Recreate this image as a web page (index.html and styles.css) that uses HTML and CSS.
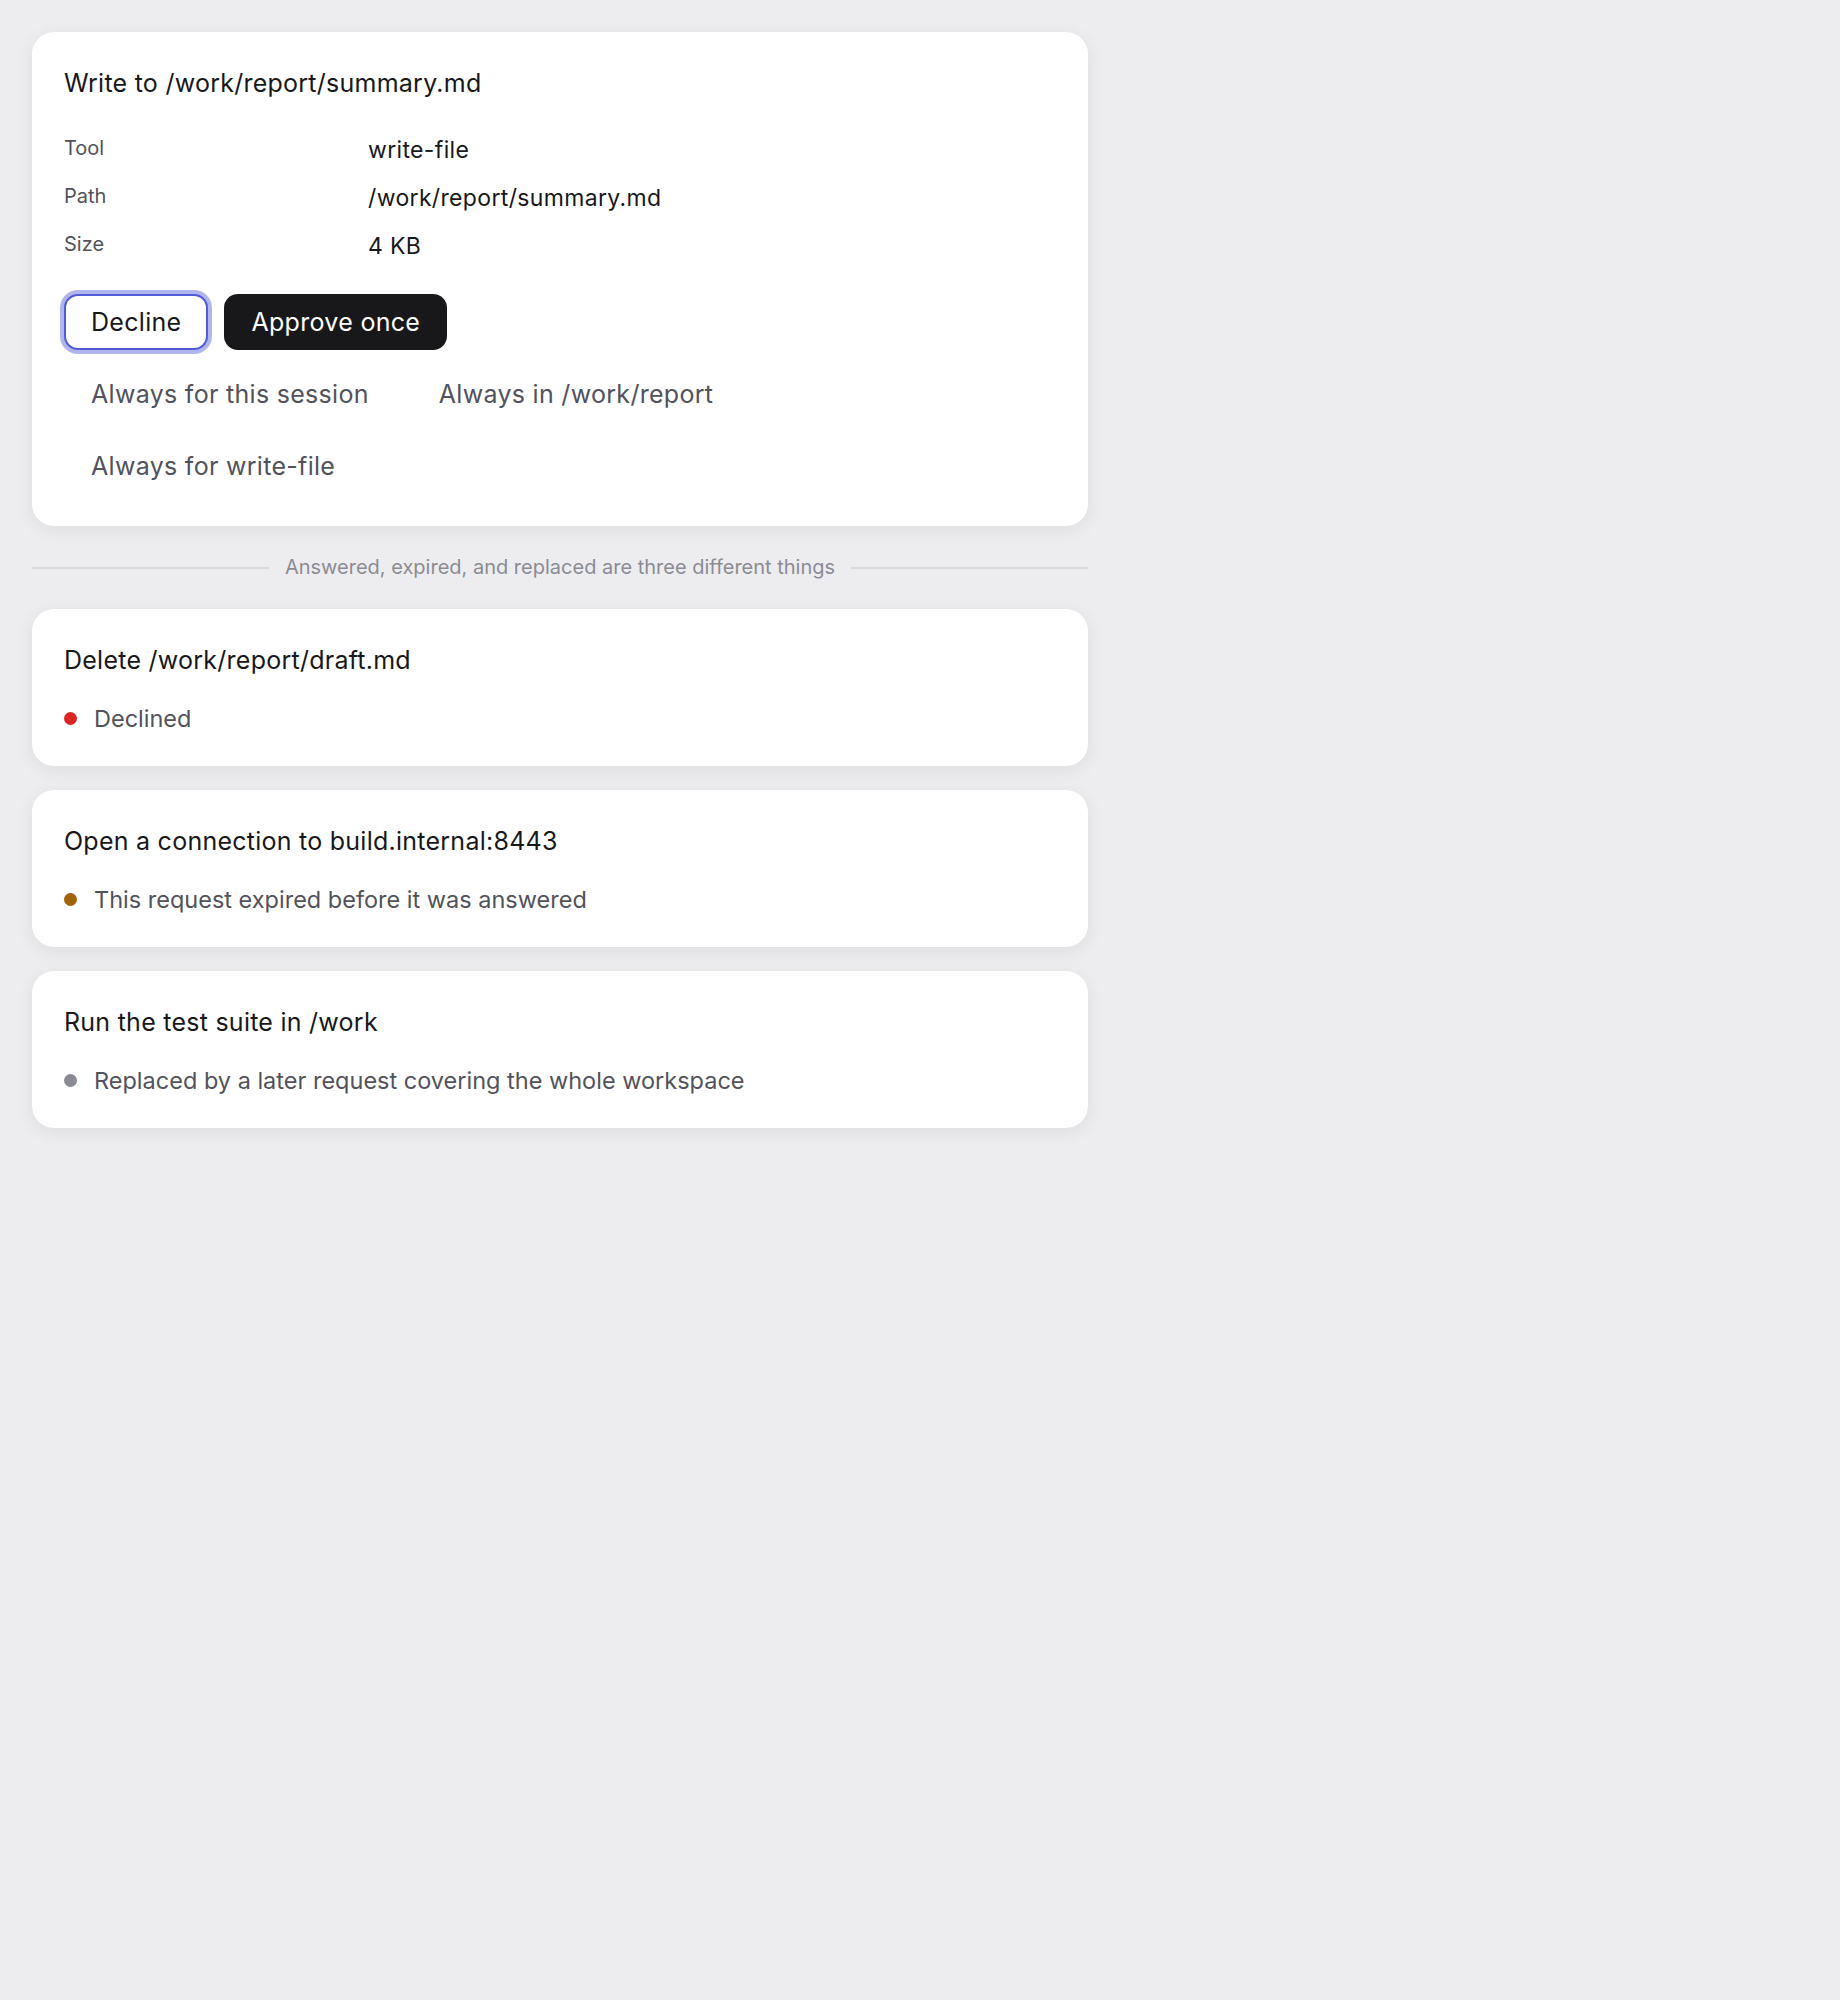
FILE: index.html
```html
<!DOCTYPE html>
<html lang="en">
<head>
    <meta charset="UTF-8">
    <meta name="viewport" content="width=device-width, initial-scale=1.0">
    <title>Permission requests</title>
    <link rel="stylesheet" href="styles.css">
</head>
<body>
    <main class="requests">
        <section class="card">
            <h2 class="card-title">Write to /work/report/summary.md</h2>
            <dl class="details">
                <dt>Tool</dt>
                <dd>write-file</dd>
                <dt>Path</dt>
                <dd>/work/report/summary.md</dd>
                <dt>Size</dt>
                <dd>4 KB</dd>
            </dl>
            <div class="actions">
                <button class="btn btn-outline is-focused">Decline</button>
                <button class="btn btn-dark">Approve once</button>
            </div>
            <div class="more-actions">
                <button class="btn btn-ghost">Always for this session</button>
                <button class="btn btn-ghost">Always in /work/report</button>
                <button class="btn btn-ghost">Always for write-file</button>
            </div>
        </section>

        <div class="divider"><span>Answered, expired, and replaced are three different things</span></div>

        <section class="card">
            <h2 class="card-title">Delete /work/report/draft.md</h2>
            <p class="status"><span class="dot dot-declined"></span>Declined</p>
        </section>

        <section class="card">
            <h2 class="card-title">Open a connection to build.internal:8443</h2>
            <p class="status"><span class="dot dot-expired"></span>This request expired before it was answered</p>
        </section>

        <section class="card">
            <h2 class="card-title">Run the test suite in /work</h2>
            <p class="status"><span class="dot dot-replaced"></span>Replaced by a later request covering the whole workspace</p>
        </section>
    </main>
</body>
</html>
```

FILE: styles.css
```css
* {
    margin: 0;
    padding: 0;
    box-sizing: border-box;
}

body {
    background: #ededf0;
    color: #18181b;
    font-family: Inter, "Noto Sans", sans-serif;
    padding: 32px;
}

.requests {
    width: 1056px;
    display: flex;
    flex-direction: column;
    gap: 24px;
}

.card {
    background: white;
    border-radius: 22px;
    padding: 32px;
    box-shadow: 0px 4px 18px rgba(24, 24, 27, 0.07);
}

.card-title {
    font-size: 25px;
    font-weight: 400;
    line-height: 38px;
    letter-spacing: 0.01em;
}

.details {
    display: grid;
    grid-template-columns: 304px 1fr;
    margin-top: 24px;
}

.details dt,
.details dd {
    height: 48px;
    display: flex;
    align-items: center;
}

.details dt {
    font-size: 20px;
    color: #52525b;
    padding-bottom: 4px;
}

.details dd {
    font-size: 23px;
    letter-spacing: 0.015em;
}

.actions {
    display: flex;
    gap: 16px;
    margin-top: 24px;
}

.more-actions {
    display: grid;
    grid-template-columns: repeat(2, max-content);
    gap: 16px;
    margin-top: 16px;
}

.more-actions .btn {
    justify-self: start;
}

.btn {
    font-family: inherit;
    font-size: 25px;
    letter-spacing: 0.012em;
    line-height: 36px;
    padding: 8px 25px;
    border: 2px solid transparent;
    border-radius: 14px;
    cursor: pointer;
}

.btn-outline {
    background: white;
    color: #18181b;
    border-color: #d4d4d8;
}

.btn-outline.is-focused {
    border-color: #4f5ad6;
    box-shadow: 0px 0px 0px 4px #b1b5ee;
}

.btn-dark {
    background: #18181b;
    color: white;
}

.btn-ghost {
    background: none;
    color: #52525b;
}

.divider {
    display: flex;
    align-items: center;
    gap: 16px;
    font-size: 20px;
    line-height: 35px;
    color: #8b8b93;
}

.divider::before,
.divider::after {
    content: "";
    flex: 1;
    height: 2px;
    background: #d9d9dd;
}

.status {
    display: flex;
    align-items: center;
    gap: 17px;
    margin-top: 24px;
    font-size: 23.5px;
    line-height: 31px;
    color: #52525b;
}

.dot {
    width: 13px;
    height: 13px;
    border-radius: 50%;
    flex-shrink: 0;
}

.dot-declined {
    background: #dc2626;
}

.dot-expired {
    background: #a16207;
}

.dot-replaced {
    background: #8a8a93;
}
```
